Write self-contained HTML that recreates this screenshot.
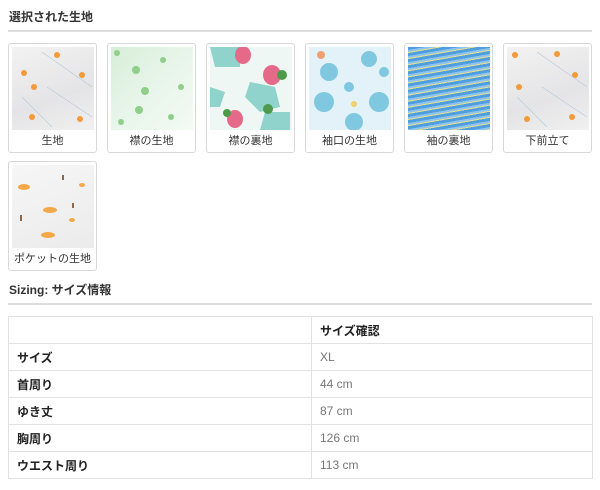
<!DOCTYPE html>
<html><head><meta charset="utf-8"><style>
*{margin:0;padding:0;box-sizing:border-box}
body{width:600px;height:490px;background:#fff;font-family:"Liberation Sans","Noto Sans CJK JP",sans-serif;color:#333;position:relative;overflow:hidden}
h2{position:absolute;left:9px;font-size:12px;font-weight:bold;color:#333}
.rule{position:absolute;left:8px;right:8px;height:2px;background:#ddd}
.card{position:absolute;width:89px;height:110px;border:1px solid #d8d8d8;border-radius:3px;background:#fff}
.card .img{position:absolute;left:3px;top:3px;width:82px;height:83px;overflow:hidden}
.card .lbl{position:absolute;left:0;right:0;top:88px;text-align:center;font-size:11px;color:#333}
table{position:absolute;left:8px;top:316px;width:585px;border-collapse:collapse;font-size:12px}
td{border:1px solid #e2e2e2;height:27px;padding:0 0 0 8px}
td.l{width:303px;font-weight:bold;color:#222}
td.v{color:#777}
</style></head><body>
<h2 style="top:8px">選択された生地</h2>
<div class="rule" style="top:30px"></div>

<div class="card" style="left:8px;top:43px"><div class="img" style="background:linear-gradient(160deg,#f2f2f2,#e4e4e6 60%,#f0f0f0)">
<svg width="82" height="83"><g fill="#f39a3a"><circle cx="12" cy="26" r="3"/><circle cx="45" cy="8" r="3"/><circle cx="70" cy="28" r="3"/><circle cx="22" cy="40" r="3"/><circle cx="20" cy="70" r="3"/><circle cx="68" cy="72" r="3"/></g><g stroke="#b8c8d8" fill="none" stroke-width=".6"><path d="M30 5 L80 40M35 40 L80 70M10 50 L40 80"/></g></svg></div><div class="lbl">生地</div></div>

<div class="card" style="left:107px;top:43px"><div class="img" style="background:linear-gradient(135deg,#d7eed8,#e8f5ea 50%,#f3faf3)">
<svg width="82" height="83"><g fill="#8fcf8a"><circle cx="6" cy="6" r="3"/><circle cx="25" cy="23" r="4"/><circle cx="52" cy="13" r="3"/><circle cx="34" cy="44" r="4"/><circle cx="70" cy="40" r="3"/><circle cx="28" cy="63" r="4"/><circle cx="60" cy="70" r="3"/><circle cx="10" cy="75" r="3"/></g></svg></div><div class="lbl">襟の生地</div></div>

<div class="card" style="left:206px;top:43px"><div class="img" style="background:#eef7f3">
<svg width="82" height="83"><g fill="#8fd3cc"><path d="M0 0h30v20H5z"/><path d="M40 35l25 5 5 20-20 5-15-15z"/><path d="M0 40l15 5-5 15H0z"/><path d="M55 65h25v18H50z"/></g><g fill="#e56a8a"><ellipse cx="33" cy="8" rx="8" ry="9"/><ellipse cx="62" cy="28" rx="9" ry="10"/><ellipse cx="25" cy="72" rx="8" ry="9"/></g><g fill="#4d9a4a"><circle cx="72" cy="28" r="5"/><circle cx="17" cy="66" r="4"/><circle cx="58" cy="62" r="5"/></g></svg></div><div class="lbl">襟の裏地</div></div>

<div class="card" style="left:305px;top:43px"><div class="img" style="background:#e3f2f8">
<svg width="82" height="83"><g fill="#7fc8e0"><circle cx="20" cy="25" r="9"/><circle cx="60" cy="12" r="8"/><circle cx="15" cy="55" r="10"/><circle cx="45" cy="75" r="9"/><circle cx="70" cy="55" r="10"/><circle cx="75" cy="25" r="5"/><circle cx="40" cy="40" r="5"/></g><circle cx="12" cy="8" r="4" fill="#f0a070"/><circle cx="45" cy="57" r="3" fill="#f0d070"/></svg></div><div class="lbl">袖口の生地</div></div>

<div class="card" style="left:404px;top:43px"><div class="img" style="background:repeating-linear-gradient(170deg,#4f9fe0 0 3px,#8fc4ef 3px 5px,#e8e08a 5px 6px)"></div><div class="lbl">袖の裏地</div></div>

<div class="card" style="left:503px;top:43px"><div class="img" style="background:linear-gradient(160deg,#f2f2f2,#e4e4e6 60%,#f0f0f0)">
<svg width="82" height="83"><g fill="#f39a3a"><circle cx="8" cy="8" r="3"/><circle cx="50" cy="7" r="3"/><circle cx="68" cy="28" r="3"/><circle cx="12" cy="40" r="3"/><circle cx="20" cy="72" r="3"/><circle cx="65" cy="70" r="3"/></g><g stroke="#b8c8d8" fill="none" stroke-width=".6"><path d="M30 5 L80 40M35 40 L80 70M10 50 L40 80"/></g></svg></div><div class="lbl">下前立て</div></div>

<div class="card" style="left:8px;top:161px"><div class="img" style="background:linear-gradient(160deg,#f6f6f6,#ebebeb)">
<svg width="82" height="83"><g fill="#f3a84a"><ellipse cx="12" cy="22" rx="6" ry="3"/><ellipse cx="38" cy="45" rx="7" ry="3"/><ellipse cx="36" cy="70" rx="7" ry="3"/><ellipse cx="70" cy="20" rx="3" ry="2"/><ellipse cx="60" cy="55" rx="3" ry="2"/></g><g fill="#8a6a4a"><rect x="8" y="50" width="2" height="6"/><rect x="60" y="38" width="2" height="5"/><rect x="50" y="10" width="2" height="5"/></g></svg></div><div class="lbl">ポケットの生地</div></div>

<h2 style="top:281px">Sizing: サイズ情報</h2>
<div class="rule" style="top:303px"></div>

<table>
<tr><td class="l"></td><td style="font-weight:bold;color:#222">サイズ確認</td></tr>
<tr><td class="l">サイズ</td><td class="v">XL</td></tr>
<tr><td class="l">首周り</td><td class="v">44 cm</td></tr>
<tr><td class="l">ゆき丈</td><td class="v">87 cm</td></tr>
<tr><td class="l">胸周り</td><td class="v">126 cm</td></tr>
<tr><td class="l">ウエスト周り</td><td class="v">113 cm</td></tr>
</table>
</body></html>
